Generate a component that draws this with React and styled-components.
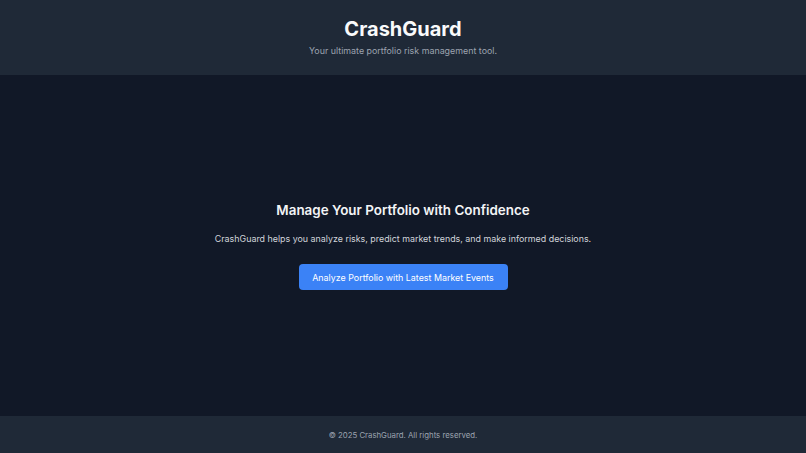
import React from 'react'
import styled, { createGlobalStyle } from 'styled-components'

const GlobalStyle = createGlobalStyle`
  html, body {
    margin: 0;
    padding: 0;
    height: 100%;
  }
  body {
    font-family: Inter, 'Noto Sans', sans-serif;
    background: #111827;
  }
  #root {
    height: 100%;
  }
`

const Page = styled.div`
  display: flex;
  flex-direction: column;
  height: 100vh;
  background: #111827;
  color: #f3f4f6;
`

const Header = styled.header`
  background: #1f2937;
  height: 75px;
  box-sizing: border-box;
  padding-top: 17px;
  text-align: center;
`

const Title = styled.h1`
  margin: 0;
  font-size: 20px;
  line-height: 24px;
  font-weight: 700;
  color: #f9fafb;
`

const Subtitle = styled.p`
  margin: 4px 0 0;
  font-size: 8.9px;
  line-height: 12px;
  color: #9ca3af;
`

const Main = styled.main`
  flex: 1;
  display: flex;
  flex-direction: column;
  align-items: center;
  justify-content: center;
  text-align: center;
`

const Heading = styled.h2`
  margin: 0;
  font-size: 13.4px;
  line-height: 18px;
  font-weight: 600;
  color: #f3f4f6;
`

const Lead = styled.p`
  margin: 14px 0 0;
  font-size: 8.9px;
  line-height: 12px;
  color: #d1d5db;
`

const Button = styled.button`
  margin-top: 19px;
  width: 209px;
  height: 26px;
  border: none;
  border-radius: 4px;
  background: #3b82f6;
  color: #ffffff;
  font-family: inherit;
  font-size: 8.9px;
  cursor: pointer;
`

const Footer = styled.footer`
  background: #1f2937;
  height: 37px;
  display: flex;
  align-items: center;
  justify-content: center;
  font-size: 7.8px;
  color: #9ca3af;
`

export default function App() {
  return (
    <>
      <GlobalStyle />
      <Page>
        <Header>
          <Title>CrashGuard</Title>
          <Subtitle>Your ultimate portfolio risk management tool.</Subtitle>
        </Header>
        <Main>
          <Heading>Manage Your Portfolio with Confidence</Heading>
          <Lead>
            CrashGuard helps you analyze risks, predict market trends, and make
            informed decisions.
          </Lead>
          <Button type='button'>Analyze Portfolio with Latest Market Events</Button>
        </Main>
        <Footer>© 2025 CrashGuard. All rights reserved.</Footer>
      </Page>
    </>
  )
}
